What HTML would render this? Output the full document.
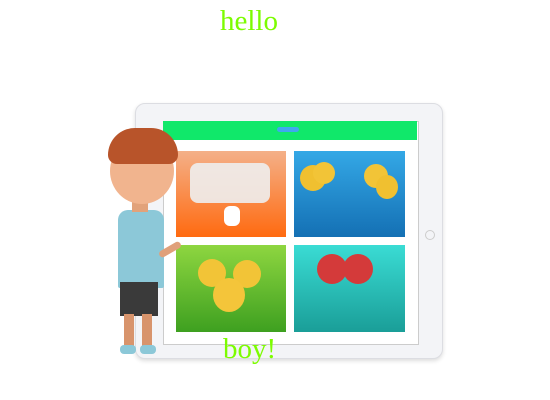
<!DOCTYPE html>
<html><head><style>
body{margin:0;width:550px;height:400px;background:#fff;position:relative;overflow:hidden;font-family:"Liberation Serif",serif}
div{position:absolute}
.t{color:#7CFC00;font-size:29px}
</style></head><body>
<div class="t" style="left:220px;top:5px">hello</div>
<div style="left:135px;top:103px;width:306px;height:254px;background:#f3f4f7;border:1px solid #dcdde2;border-radius:10px;box-shadow:0 2px 4px #ddd"></div>
<div style="left:163px;top:121px;width:254px;height:222px;background:#fff;border:1px solid #ccc"></div>
<div style="left:163px;top:121px;width:254px;height:19px;background:#10e86a"></div>
<div style="left:277px;top:127px;width:22px;height:5px;background:#3fa8ee;border-radius:3px"></div>
<div style="left:425px;top:230px;width:8px;height:8px;border:1px solid #ccc;border-radius:50%"></div>
<div style="left:176px;top:151px;width:110px;height:86px;background:linear-gradient(#f4b088,#ff6a10)"></div>
<div style="left:190px;top:163px;width:80px;height:40px;background:#eee;border-radius:8px;opacity:.9"></div>
<div style="left:224px;top:206px;width:16px;height:20px;background:#fff;border-radius:6px"></div>
<div style="left:294px;top:151px;width:111px;height:86px;background:linear-gradient(#34a8e6,#1470b4)"></div>
<div style="left:300px;top:165px;width:26px;height:26px;background:#f0c030;border-radius:50%"></div>
<div style="left:313px;top:162px;width:22px;height:22px;background:#f2c437;border-radius:50%"></div>
<div style="left:364px;top:164px;width:24px;height:24px;background:#f2c437;border-radius:50%"></div>
<div style="left:376px;top:175px;width:22px;height:24px;background:#f0c030;border-radius:50%"></div>
<div style="left:176px;top:245px;width:110px;height:87px;background:linear-gradient(#8ed640,#3ea020)"></div>
<div style="left:198px;top:259px;width:28px;height:28px;background:#f2c437;border-radius:50%"></div>
<div style="left:233px;top:260px;width:28px;height:28px;background:#f2c437;border-radius:50%"></div>
<div style="left:213px;top:278px;width:32px;height:34px;background:#f4c53a;border-radius:50%"></div>
<div style="left:294px;top:245px;width:111px;height:87px;background:linear-gradient(#3adcd4,#1a9e98)"></div>
<div style="left:317px;top:254px;width:30px;height:30px;background:#d43a3a;border-radius:50%"></div>
<div style="left:343px;top:254px;width:30px;height:30px;background:#d43a3a;border-radius:50%"></div>
<div style="left:118px;top:210px;width:46px;height:78px;background:#8cc8d8;border-radius:10px 10px 2px 2px"></div>
<div style="left:120px;top:282px;width:38px;height:34px;background:#3a3a3a"></div>
<div style="left:124px;top:314px;width:10px;height:34px;background:#d8946c"></div>
<div style="left:142px;top:314px;width:10px;height:34px;background:#d8946c"></div>
<div style="left:120px;top:345px;width:16px;height:9px;background:#8cc8d8;border-radius:4px"></div>
<div style="left:140px;top:345px;width:16px;height:9px;background:#8cc8d8;border-radius:4px"></div>
<div style="left:158px;top:246px;width:24px;height:7px;background:#e0a07a;border-radius:4px;transform:rotate(-30deg)"></div>
<div style="left:132px;top:196px;width:16px;height:16px;background:#e2a27a"></div>
<div style="left:110px;top:138px;width:64px;height:66px;background:#f1b48e;border-radius:50%"></div>
<div style="left:108px;top:128px;width:70px;height:36px;background:#b8542a;border-radius:30px 30px 10px 10px"></div>
<div class="t" style="left:223px;top:333px">boy!</div>
</body></html>
